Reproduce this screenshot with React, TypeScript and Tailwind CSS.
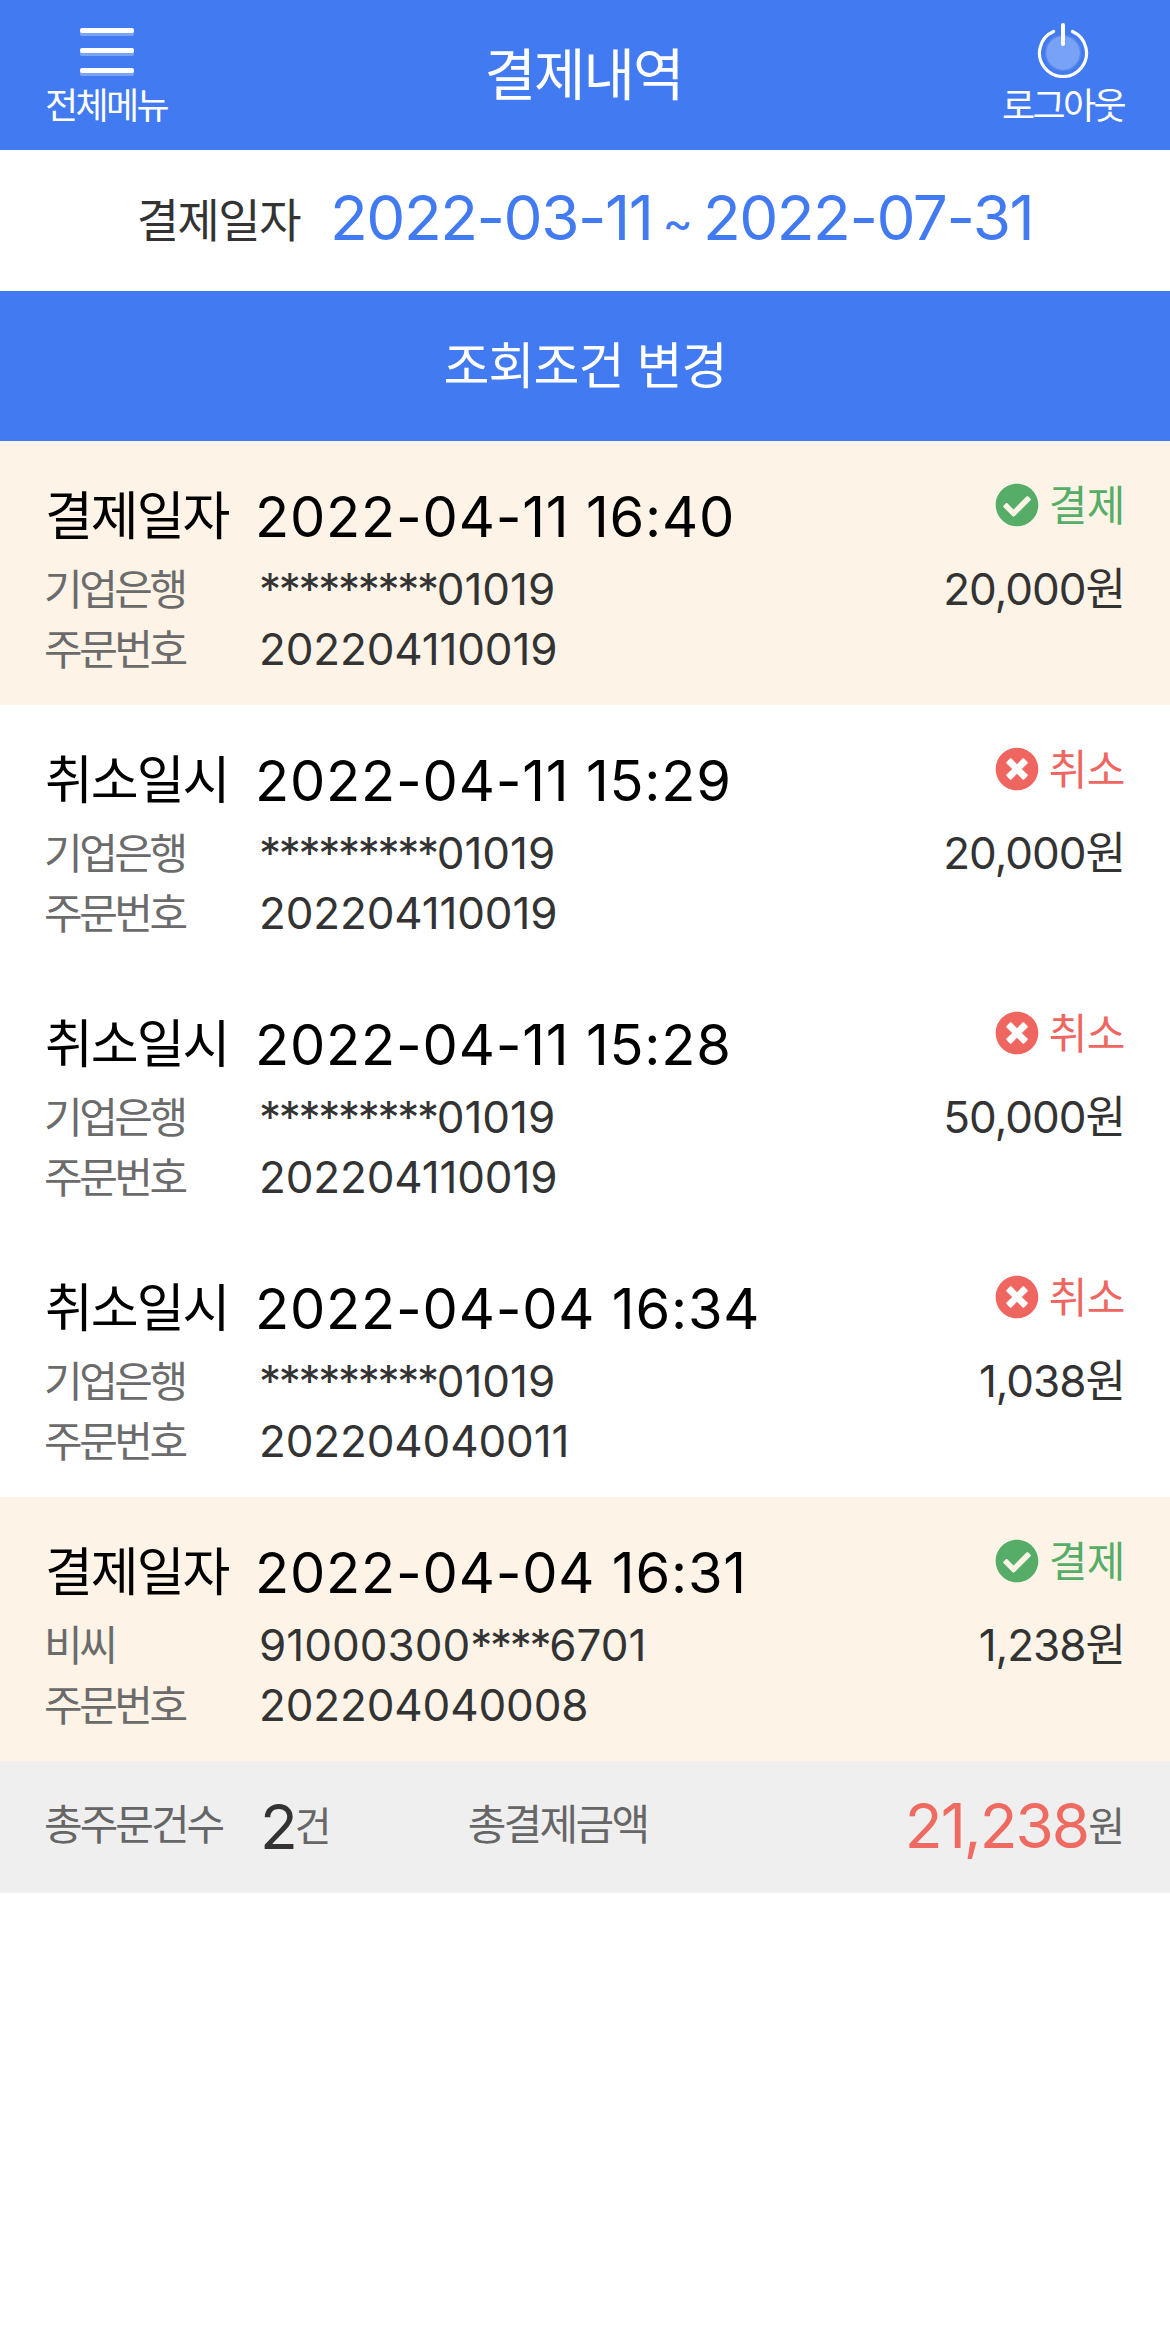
import { FaCheckCircle, FaTimesCircle } from "react-icons/fa";

const FONT = "font-['Inter','Noto_Sans_CJK_KR',sans-serif]";

interface Row {
  paid: boolean;
  date: string;
  bank: string;
  account: string;
  amount: string;
  order: string;
}

const ROWS: Row[] = [
  { paid: true, date: "2022-04-11 16:40", bank: "기업은행", account: "*********01019", amount: "20,000원", order: "202204110019" },
  { paid: false, date: "2022-04-11 15:29", bank: "기업은행", account: "*********01019", amount: "20,000원", order: "202204110019" },
  { paid: false, date: "2022-04-11 15:28", bank: "기업은행", account: "*********01019", amount: "50,000원", order: "202204110019" },
  { paid: false, date: "2022-04-04 16:34", bank: "기업은행", account: "*********01019", amount: "1,038원", order: "202204040011" },
  { paid: true, date: "2022-04-04 16:31", bank: "비씨", account: "91000300****6701", amount: "1,238원", order: "202204040008" },
];

function PowerIcon() {
  return (
    <svg width="56" height="56" viewBox="0 0 56 56" fill="none">
      <circle cx="28" cy="31" r="17.5" fill="#78a2f5" stroke="#5a88ea" strokeWidth="1.5" />
      <path d="M18.5 9.5a23.5 23.5 0 1 0 19 0" stroke="#fff" strokeWidth="3.2" strokeLinecap="round" />
      <path d="M28 3v19" stroke="#fff" strokeWidth="4" strokeLinecap="round" />
    </svg>
  );
}

// the asterisks of a masked account number sit closer than the digits
function Masked({ value }: { value: string }) {
  return (
    <>
      {value.split(/(\*+)/).map((part, i) =>
        part.startsWith("*") ? (
          <span key={i} className="tracking-[-2.3px]">
            {part}
          </span>
        ) : (
          <span key={i}>{part}</span>
        ),
      )}
    </>
  );
}

function PaymentRow({ row }: { row: Row }) {
  return (
    <div className={`h-[264px] px-[45px] pt-[41px] ${row.paid ? "bg-[#fdf3e7]" : "bg-white"}`}>
      <div className="flex h-[70px] items-start">
        <span className="w-[210px] text-[52px] leading-[70px] tracking-[-2px] text-black">
          {row.paid ? "결제일자" : "취소일시"}
        </span>
        <span className="text-[56px] leading-[70px] tracking-[0.8px] text-black">{row.date}</span>
        <span
          className={`-mt-[2px] ml-auto flex h-[50px] items-center gap-[10px] text-[42px] tracking-[-0.5px] ${row.paid ? "text-[#55ad67]" : "text-[#ee665f]"}`}
        >
          {row.paid ? <FaCheckCircle size={44} /> : <FaTimesCircle size={44} />}
          {row.paid ? "결제" : "취소"}
        </span>
      </div>
      <div className="mt-[7px] flex h-[60px] items-center text-[#333]">
        <span className="-ml-[1px] w-[215px] text-[42px] tracking-[-3.5px] text-[#6b6b6b]">{row.bank}</span>
        <span className="text-[44px]">
          <Masked value={row.account} />
        </span>
        <span className="ml-auto text-[44px] tracking-[-1px]">{row.amount}</span>
      </div>
      <div className="flex h-[60px] items-center text-[#333]">
        <span className="-ml-[1px] w-[215px] text-[42px] tracking-[-3.5px] text-[#6b6b6b]">주문번호</span>
        <span className="text-[44px] tracking-[-0.15px]">{row.order}</span>
      </div>
    </div>
  );
}

export default function App() {
  return (
    <div className={`min-h-[2342px] bg-white ${FONT}`}>
      <header className="flex h-[150px] items-start justify-between bg-[#427bf1] px-[45px] text-white">
        <div className="flex w-[124px] flex-col items-center pt-[28px]">
          <div className="flex w-[54px] flex-col gap-[15px]">
            <span className="h-[5px] rounded-[2px] bg-white shadow-[0_3px_0_rgba(255,255,255,0.3)]" />
            <span className="h-[5px] rounded-[2px] bg-white shadow-[0_3px_0_rgba(255,255,255,0.3)]" />
            <span className="h-[5px] rounded-[2px] bg-white shadow-[0_3px_0_rgba(255,255,255,0.3)]" />
          </div>
          <span className="mr-[2px] mt-[11px] whitespace-nowrap text-[36px] leading-[44px] tracking-[-2.6px]">전체메뉴</span>
        </div>
        <h1 className="mr-[3px] self-center text-[56px] tracking-[-2px]">결제내역</h1>
        <div className="flex w-[124px] flex-col items-center pt-[22px]">
          <PowerIcon />
          <span className="mt-[6px] whitespace-nowrap text-[36px] leading-[44px] tracking-[-2.6px]">로그아웃</span>
        </div>
      </header>

      <div className="flex h-[141px] items-center justify-center">
        <span className="mr-[30px] text-[46px] tracking-[-1.5px] text-[#333]">결제일자</span>
        <span className="pb-[6px] text-[62px] tracking-[-1.5px] text-[#427bf1]">2022-03-11</span>
        <span className="mx-[10px] pt-[4px] text-[46px] text-[#427bf1]">~</span>
        <span className="pb-[6px] text-[62px] tracking-[-1.5px] text-[#427bf1]">2022-07-31</span>
      </div>

      <div className="flex h-[150px] items-center justify-center bg-[#427bf1] text-[50px] tracking-[-1px] text-white">
        조회조건 변경
      </div>

      {ROWS.map((row, i) => (
        <PaymentRow key={i} row={row} />
      ))}

      <div className="flex h-[132px] items-center bg-[#efefef] px-[45px]">
        <span className="-ml-[1px] w-[216px] pb-[6px] text-[42px] tracking-[-3px] text-[#666]">총주문건수</span>
        <span className="pb-[2px] text-[62px] tracking-[-3px] text-[#333]">2</span>
        <span className="text-[40px] text-[#666]">건</span>
        <span className="ml-[136px] pb-[6px] text-[42px] tracking-[-2.7px] text-[#666]">총결제금액</span>
        <span className="ml-auto pb-[4px] text-[62px] tracking-[-2px] text-[#ef6a60]">21,238</span>
        <span className="text-[40px] text-[#666]">원</span>
      </div>
    </div>
  );
}
